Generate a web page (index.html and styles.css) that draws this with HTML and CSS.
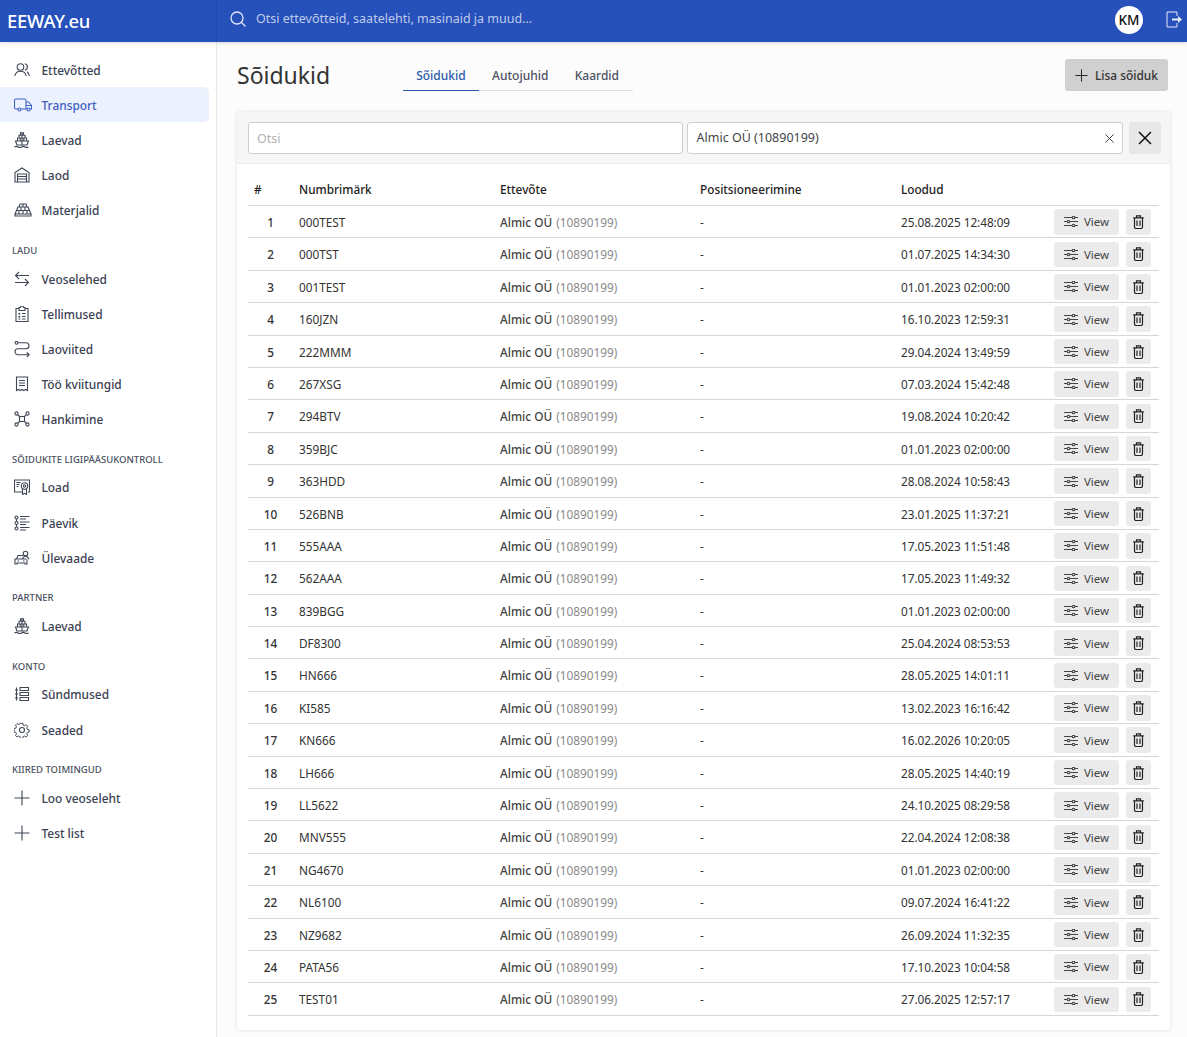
FILE: index.html
```html
<!DOCTYPE html>
<html lang="et">
<head>
<meta charset="utf-8">
<title>Sõidukid</title>
<link rel="stylesheet" href="styles.css">
</head>
<body>
<svg class="defs" width="0" height="0" aria-hidden="true">
  <defs>
    <symbol id="i-users" viewBox="0 0 16 16"><circle cx="6.500" cy="5" r="3.300"/><path d="M.8 14c.6-3 2.800-4.700 5.700-4.700s5.100 1.700 5.700 4.700M10.800 1.800c1.600.3 2.600 1.600 2.600 3.200s-1 2.900-2.500 3.200M13 9.800c1.200.8 2 2.200 2.400 4.200"/></symbol>
    <symbol id="i-truck" viewBox="0 0 18 14"><path d="M4 11H2a1.500 1.500 0 0 1-1.500-1.500v-7A1.500 1.500 0 0 1 2 1h8.500a1.500 1.500 0 0 1 1.500 1.500V11H7M12 4h2.500l3 3.500V11h-1.500M17 7.500h-5M12 11h1"/><circle cx="5.500" cy="11.500" r="1.500"/><circle cx="14.500" cy="11.500" r="1.500"/></symbol>
    <symbol id="i-ship" viewBox="0 0 16 16"><path d="M6.500 .8h3v2.400h-3zM5 3.200h6v2.800H5zM3.500 6h9v3h-9zM1.500 9h13l-1.500 4H3zM8 .8V13M6.200 6v3M9.800 6v3M.5 15c1.200-.8 2.300-.8 3.500 0s2.300.8 3.500 0 2.300-.8 3.500 0 2.300.8 3.500 0"/></symbol>
    <symbol id="i-store" viewBox="0 0 16 16"><path d="M1 15V5.500L8 1l7 4.500V15zM3.500 15V7h9v8M3.500 9.500h9M3.500 12h9"/></symbol>
    <symbol id="i-bricks" viewBox="0 0 18 14"><path d="M6 1h6l1 3H5zM4 4h10l1.500 3.500h-13zM2.500 7.500h13L17 11H1zM1 11h16v2H1zM9 1v3M7 4v3.500M11 4v3.500M5 7.500V11M9 7.500V11M13 7.500V11"/></symbol>
    <symbol id="i-swap" viewBox="0 0 16 16"><path d="M15 4.500H1.500M5 1 1.500 4.500 5 8M1 11.500h13.500M11 8l3.500 3.500L11 15"/></symbol>
    <symbol id="i-clip" viewBox="0 0 16 16"><path d="M5 2.500H2v13h12v-13h-3M5 1.500h1.500a1.500 1.500 0 0 1 3 0H11v3H5zM4.500 7.500l.7.700 1-1.200M8 7.500h3.500M4.500 10.500l.7.700 1-1.200M8 10.500h3.500M4.500 13h2M8 13h3.500"/></symbol>
    <symbol id="i-route" viewBox="0 0 16 16"><circle cx="2.500" cy="1.800" r="1.400"/><path d="M4 1.800h8a3 3 0 0 1 0 6H4a3 3 0 0 0 0 6h11M12.800 11.500l2.400 2.300-2.400 2.200"/></symbol>
    <symbol id="i-receipt" viewBox="0 0 16 16"><path d="M2.500 14.500V1h11v13.500l-1.800-1-1.900 1-1.800-1-1.800 1-1.900-1zM5 4.500h6M5 7h6M5 9.500h6"/></symbol>
    <symbol id="i-nodes" viewBox="0 0 16 16"><rect x="5.500" y="5.500" width="5" height="5"/><circle cx="2.500" cy="2.500" r="1.600"/><circle cx="13.500" cy="2.500" r="1.600"/><circle cx="2.500" cy="13.500" r="1.600"/><circle cx="13.500" cy="13.500" r="1.600"/><path d="M3.700 3.700l1.800 1.800M12.300 3.700l-1.800 1.800M3.700 12.300l1.800-1.800M12.300 12.300l-1.800-1.800"/></symbol>
    <symbol id="i-cert" viewBox="0 0 16 16"><path d="M8 13H.5V1h15v12h-1.500M2.500 3.500h4M2.500 5.500h3M2.500 7.500h2"/><circle cx="10.500" cy="7" r="3.200"/><circle cx="10.500" cy="7" r="1.200"/><path d="M8.500 10v5.500l2-1.200 2 1.200V10"/></symbol>
    <symbol id="i-log" viewBox="0 0 16 16"><circle cx="2.500" cy="2.500" r="1.500"/><circle cx="2.500" cy="8" r="1.500"/><circle cx="2.500" cy="13.500" r="1.500"/><path d="M2.500 4v2.500M2.500 9.500V12M6 1.500h9.500M6 4h6M6 7h9.500M6 9.500h6M6 12.500h9.500M6 15h6"/></symbol>
    <symbol id="i-carp" viewBox="0 0 16 16"><path d="M9 5.500H4L2.500 9H1v5h2v-1h8v1h2V9.500M2.500 9h10M3.500 11h1.500M9 11h1.500"/><circle cx="11.500" cy="3.500" r="2.300"/><path d="M8.500 9c.4-1.800 1.500-2.800 3-2.800s2.800 1 3.500 3"/></symbol>
    <symbol id="i-stack" viewBox="0 0 16 16"><path d="M6 1.500h8.500v3H6zM6 6.500h8.500v3H6zM6 11.500h8.500v3H6zM2.500 1.500v13M1 4h3M1 8h3M1 12h3"/></symbol>
    <symbol id="i-gear" viewBox="0 0 16 16"><circle cx="8" cy="8" r="2.500"/><path d="M6.700 1h2.600l.4 2 1.500.7 1.800-1.100 1.800 1.800-1.100 1.800.7 1.500 2 .4v2.600l-2 .4-.7 1.500 1.100 1.800-1.800 1.800-1.800-1.100-1.500.7-.4 2H6.700l-.4-2-1.500-.7-1.800 1.100-1.800-1.800 1.100-1.800-.7-1.500-2-.4V6.700l2-.4.7-1.500-1.100-1.800 1.800-1.800 1.800 1.100 1.500-.7z" transform="translate(.4 .4) scale(.9)"/></symbol>
    <symbol id="i-plus" viewBox="0 0 16 16"><path d="M8 .5v15M.5 8h15"/></symbol>
    <symbol id="i-sliders" viewBox="0 0 14 11"><path d="M0 1.500h8M11 1.500h3M0 5.500h3M6 5.500h8M0 9.500h8M11 9.500h3"/><circle cx="9.500" cy="1.500" r="1.300"/><circle cx="4.500" cy="5.500" r="1.300"/><circle cx="9.500" cy="9.500" r="1.300"/></symbol>
    <symbol id="i-trash" viewBox="0 0 11 14"><path d="M.2 2.800h10.600M3.500 2.800V.8h4v2M1.500 2.800V12a1.500 1.500 0 0 0 1.500 1.500h5A1.500 1.500 0 0 0 9.500 12V2.800M4 5.500v5.500M7 5.500v5.500"/></symbol>
  </defs>
</svg>

<header class="topbar">
  <div class="brand">EEWAY.eu</div>
  <div class="search">
    <svg class="search-icon" viewBox="0 0 16 16"><circle cx="7" cy="7" r="6"/><path d="M11.500 11.500 15.500 15.500"/></svg>
    <span>Otsi ettevõtteid, saatelehti, masinaid ja muud...</span>
  </div>
  <div class="avatar">KM</div>
  <svg class="logout" viewBox="0 0 17 17"><path d="M11 5V1H1v15h10v-4"/><path class="solid" d="M6 7.500h6V5l4 3.500-4 3.500V9.500H6z"/></svg>
</header>

<div class="shell">
  <nav class="sidebar">
    <a class="item"><svg class="ico"><use href="#i-users"/></svg>Ettevõtted</a>
    <a class="item active"><svg class="ico wide"><use href="#i-truck"/></svg>Transport</a>
    <a class="item"><svg class="ico"><use href="#i-ship"/></svg>Laevad</a>
    <a class="item"><svg class="ico"><use href="#i-store"/></svg>Laod</a>
    <a class="item"><svg class="ico wide"><use href="#i-bricks"/></svg>Materjalid</a>

    <div class="label">LADU</div>
    <a class="item"><svg class="ico"><use href="#i-swap"/></svg>Veoselehed</a>
    <a class="item"><svg class="ico"><use href="#i-clip"/></svg>Tellimused</a>
    <a class="item"><svg class="ico"><use href="#i-route"/></svg>Laoviited</a>
    <a class="item"><svg class="ico"><use href="#i-receipt"/></svg>Töö kviitungid</a>
    <a class="item"><svg class="ico"><use href="#i-nodes"/></svg>Hankimine</a>

    <div class="label">SÕIDUKITE LIGIPÄÄSUKONTROLL</div>
    <a class="item"><svg class="ico"><use href="#i-cert"/></svg>Load</a>
    <a class="item"><svg class="ico"><use href="#i-log"/></svg>Päevik</a>
    <a class="item"><svg class="ico"><use href="#i-carp"/></svg>Ülevaade</a>

    <div class="label">PARTNER</div>
    <a class="item"><svg class="ico"><use href="#i-ship"/></svg>Laevad</a>

    <div class="label">KONTO</div>
    <a class="item"><svg class="ico"><use href="#i-stack"/></svg>Sündmused</a>
    <a class="item"><svg class="ico"><use href="#i-gear"/></svg>Seaded</a>

    <div class="label">KIIRED TOIMINGUD</div>
    <a class="item"><svg class="ico"><use href="#i-plus"/></svg>Loo veoseleht</a>
    <a class="item"><svg class="ico"><use href="#i-plus"/></svg>Test list</a>
  </nav>

  <main class="main">
    <div class="page-head">
      <h1 class="title">Sõidukid</h1>
      <div class="tabs">
        <a class="tab on">Sõidukid</a>
        <a class="tab">Autojuhid</a>
        <a class="tab">Kaardid</a>
      </div>
      <button class="add"><svg class="add-ico"><use href="#i-plus"/></svg>Lisa sõiduk</button>
    </div>

    <section class="card">
      <div class="filters">
        <div class="field ph">Otsi</div>
        <div class="field sel"><span>Almic OÜ (10890199)</span><svg class="clear" viewBox="0 0 10 10"><path d="M.5.500l9 9M9.500.500l-9 9"/></svg></div>
        <button class="reset"><svg viewBox="0 0 14 14"><path d="M1 1l12 12M13 1 1 13"/></svg></button>
      </div>
      <div class="table-wrap">
        <div class="row head">
          <div>#</div><div>Numbrimärk</div><div>Ettevõte</div><div>Positsioneerimine</div><div>Loodud</div><div></div>
        </div>
        <div class="row"><div class="n">1</div><div>000TEST</div><div class="co"><b>Almic OÜ</b> <i>(10890199)</i></div><div class="p">-</div><div>25.08.2025 12:48:09</div><div class="acts"><button class="view"><svg><use href="#i-sliders"/></svg>View</button><button class="del"><svg><use href="#i-trash"/></svg></button></div></div>
        <div class="row"><div class="n">2</div><div>000TST</div><div class="co"><b>Almic OÜ</b> <i>(10890199)</i></div><div class="p">-</div><div>01.07.2025 14:34:30</div><div class="acts"><button class="view"><svg><use href="#i-sliders"/></svg>View</button><button class="del"><svg><use href="#i-trash"/></svg></button></div></div>
        <div class="row"><div class="n">3</div><div>001TEST</div><div class="co"><b>Almic OÜ</b> <i>(10890199)</i></div><div class="p">-</div><div>01.01.2023 02:00:00</div><div class="acts"><button class="view"><svg><use href="#i-sliders"/></svg>View</button><button class="del"><svg><use href="#i-trash"/></svg></button></div></div>
        <div class="row"><div class="n">4</div><div>160JZN</div><div class="co"><b>Almic OÜ</b> <i>(10890199)</i></div><div class="p">-</div><div>16.10.2023 12:59:31</div><div class="acts"><button class="view"><svg><use href="#i-sliders"/></svg>View</button><button class="del"><svg><use href="#i-trash"/></svg></button></div></div>
        <div class="row"><div class="n">5</div><div>222MMM</div><div class="co"><b>Almic OÜ</b> <i>(10890199)</i></div><div class="p">-</div><div>29.04.2024 13:49:59</div><div class="acts"><button class="view"><svg><use href="#i-sliders"/></svg>View</button><button class="del"><svg><use href="#i-trash"/></svg></button></div></div>
        <div class="row"><div class="n">6</div><div>267XSG</div><div class="co"><b>Almic OÜ</b> <i>(10890199)</i></div><div class="p">-</div><div>07.03.2024 15:42:48</div><div class="acts"><button class="view"><svg><use href="#i-sliders"/></svg>View</button><button class="del"><svg><use href="#i-trash"/></svg></button></div></div>
        <div class="row"><div class="n">7</div><div>294BTV</div><div class="co"><b>Almic OÜ</b> <i>(10890199)</i></div><div class="p">-</div><div>19.08.2024 10:20:42</div><div class="acts"><button class="view"><svg><use href="#i-sliders"/></svg>View</button><button class="del"><svg><use href="#i-trash"/></svg></button></div></div>
        <div class="row"><div class="n">8</div><div>359BJC</div><div class="co"><b>Almic OÜ</b> <i>(10890199)</i></div><div class="p">-</div><div>01.01.2023 02:00:00</div><div class="acts"><button class="view"><svg><use href="#i-sliders"/></svg>View</button><button class="del"><svg><use href="#i-trash"/></svg></button></div></div>
        <div class="row"><div class="n">9</div><div>363HDD</div><div class="co"><b>Almic OÜ</b> <i>(10890199)</i></div><div class="p">-</div><div>28.08.2024 10:58:43</div><div class="acts"><button class="view"><svg><use href="#i-sliders"/></svg>View</button><button class="del"><svg><use href="#i-trash"/></svg></button></div></div>
        <div class="row"><div class="n">10</div><div>526BNB</div><div class="co"><b>Almic OÜ</b> <i>(10890199)</i></div><div class="p">-</div><div>23.01.2025 11:37:21</div><div class="acts"><button class="view"><svg><use href="#i-sliders"/></svg>View</button><button class="del"><svg><use href="#i-trash"/></svg></button></div></div>
        <div class="row"><div class="n">11</div><div>555AAA</div><div class="co"><b>Almic OÜ</b> <i>(10890199)</i></div><div class="p">-</div><div>17.05.2023 11:51:48</div><div class="acts"><button class="view"><svg><use href="#i-sliders"/></svg>View</button><button class="del"><svg><use href="#i-trash"/></svg></button></div></div>
        <div class="row"><div class="n">12</div><div>562AAA</div><div class="co"><b>Almic OÜ</b> <i>(10890199)</i></div><div class="p">-</div><div>17.05.2023 11:49:32</div><div class="acts"><button class="view"><svg><use href="#i-sliders"/></svg>View</button><button class="del"><svg><use href="#i-trash"/></svg></button></div></div>
        <div class="row"><div class="n">13</div><div>839BGG</div><div class="co"><b>Almic OÜ</b> <i>(10890199)</i></div><div class="p">-</div><div>01.01.2023 02:00:00</div><div class="acts"><button class="view"><svg><use href="#i-sliders"/></svg>View</button><button class="del"><svg><use href="#i-trash"/></svg></button></div></div>
        <div class="row"><div class="n">14</div><div>DF8300</div><div class="co"><b>Almic OÜ</b> <i>(10890199)</i></div><div class="p">-</div><div>25.04.2024 08:53:53</div><div class="acts"><button class="view"><svg><use href="#i-sliders"/></svg>View</button><button class="del"><svg><use href="#i-trash"/></svg></button></div></div>
        <div class="row"><div class="n">15</div><div>HN666</div><div class="co"><b>Almic OÜ</b> <i>(10890199)</i></div><div class="p">-</div><div>28.05.2025 14:01:11</div><div class="acts"><button class="view"><svg><use href="#i-sliders"/></svg>View</button><button class="del"><svg><use href="#i-trash"/></svg></button></div></div>
        <div class="row"><div class="n">16</div><div>KI585</div><div class="co"><b>Almic OÜ</b> <i>(10890199)</i></div><div class="p">-</div><div>13.02.2023 16:16:42</div><div class="acts"><button class="view"><svg><use href="#i-sliders"/></svg>View</button><button class="del"><svg><use href="#i-trash"/></svg></button></div></div>
        <div class="row"><div class="n">17</div><div>KN666</div><div class="co"><b>Almic OÜ</b> <i>(10890199)</i></div><div class="p">-</div><div>16.02.2026 10:20:05</div><div class="acts"><button class="view"><svg><use href="#i-sliders"/></svg>View</button><button class="del"><svg><use href="#i-trash"/></svg></button></div></div>
        <div class="row"><div class="n">18</div><div>LH666</div><div class="co"><b>Almic OÜ</b> <i>(10890199)</i></div><div class="p">-</div><div>28.05.2025 14:40:19</div><div class="acts"><button class="view"><svg><use href="#i-sliders"/></svg>View</button><button class="del"><svg><use href="#i-trash"/></svg></button></div></div>
        <div class="row"><div class="n">19</div><div>LL5622</div><div class="co"><b>Almic OÜ</b> <i>(10890199)</i></div><div class="p">-</div><div>24.10.2025 08:29:58</div><div class="acts"><button class="view"><svg><use href="#i-sliders"/></svg>View</button><button class="del"><svg><use href="#i-trash"/></svg></button></div></div>
        <div class="row"><div class="n">20</div><div>MNV555</div><div class="co"><b>Almic OÜ</b> <i>(10890199)</i></div><div class="p">-</div><div>22.04.2024 12:08:38</div><div class="acts"><button class="view"><svg><use href="#i-sliders"/></svg>View</button><button class="del"><svg><use href="#i-trash"/></svg></button></div></div>
        <div class="row"><div class="n">21</div><div>NG4670</div><div class="co"><b>Almic OÜ</b> <i>(10890199)</i></div><div class="p">-</div><div>01.01.2023 02:00:00</div><div class="acts"><button class="view"><svg><use href="#i-sliders"/></svg>View</button><button class="del"><svg><use href="#i-trash"/></svg></button></div></div>
        <div class="row"><div class="n">22</div><div>NL6100</div><div class="co"><b>Almic OÜ</b> <i>(10890199)</i></div><div class="p">-</div><div>09.07.2024 16:41:22</div><div class="acts"><button class="view"><svg><use href="#i-sliders"/></svg>View</button><button class="del"><svg><use href="#i-trash"/></svg></button></div></div>
        <div class="row"><div class="n">23</div><div>NZ9682</div><div class="co"><b>Almic OÜ</b> <i>(10890199)</i></div><div class="p">-</div><div>26.09.2024 11:32:35</div><div class="acts"><button class="view"><svg><use href="#i-sliders"/></svg>View</button><button class="del"><svg><use href="#i-trash"/></svg></button></div></div>
        <div class="row"><div class="n">24</div><div>PATA56</div><div class="co"><b>Almic OÜ</b> <i>(10890199)</i></div><div class="p">-</div><div>17.10.2023 10:04:58</div><div class="acts"><button class="view"><svg><use href="#i-sliders"/></svg>View</button><button class="del"><svg><use href="#i-trash"/></svg></button></div></div>
        <div class="row"><div class="n">25</div><div>TEST01</div><div class="co"><b>Almic OÜ</b> <i>(10890199)</i></div><div class="p">-</div><div>27.06.2025 12:57:17</div><div class="acts"><button class="view"><svg><use href="#i-sliders"/></svg>View</button><button class="del"><svg><use href="#i-trash"/></svg></button></div></div>
      </div>
    </section>
  </main>
</div>
</body>
</html>
```
FILE: styles.css
```css
* { box-sizing: border-box; }
html, body { margin: 0; height: 100%; }
body {
  font-family: "Noto Sans", "Open Sans", sans-serif;
  font-size: 12px;
  color: #333;
  background: #fcfcfc;
  overflow: hidden;
}
.defs { display: block; height: 0; }

.topbar {
  height: 42px;
  background: #2650ba;
  display: flex;
  align-items: center;
  box-shadow: 0 1px 3px rgba(0, 0, 0, .15);
  position: relative;
}
.brand {
  width: 217px;
  height: 100%;
  padding: 0 0 2px 7px;
  display: flex;
  align-items: center;
  color: #fff;
  font-size: 18.400px;
  font-weight: 500;
  letter-spacing: -.2px;
  border-right: 1px solid #2349a9;
}
.search {
  flex: 1;
  display: flex;
  align-items: center;
  gap: 10px;
  padding-left: 13px;
  color: #bfcbea;
  font-size: 12.500px;
  margin-top: -6px;
}
.search-icon { width: 16px; height: 16px; fill: none; stroke: #dfe6f7; stroke-width: 1.300; margin-top: 2px; }
.avatar {
  width: 28px;
  height: 28px;
  border-radius: 50%;
  background: #fff;
  color: #111;
  font-size: 13.500px;
  font-weight: 500;
  display: flex;
  align-items: center;
  justify-content: center;
  margin-right: 23px;
  margin-top: -2px;
}
.logout { width: 17px; height: 17px; margin-right: 4px; margin-top: -4px; fill: none; stroke: #e6ebf8; stroke-width: 1; }
.logout .solid { fill: #e6ebf8; stroke: none; }

.shell { display: flex; height: calc(100% - 42px); }

.sidebar {
  width: 217px;
  flex: none;
  height: 100%;
  background: #fff;
  border-right: 1px solid #e8e8e8;
  padding: 10.100px 7px 0 0;
}
.item {
  height: 35.150px;
  display: flex;
  align-items: center;
  padding-left: 14px;
  gap: 11.500px;
  font-size: 11.900px;
  font-weight: 500;
  color: #3a4152;
  border-radius: 0 5px 5px 0;
}
.item.active { background: #ebf1fd; color: #3f5fc4; }
.ico {
  width: 16px;
  height: 16px;
  flex: none;
  fill: none;
  stroke: #3f4656;
  stroke-width: 1.100;
}
.ico.wide { width: 18px; margin-right: -2px; }
.item.active .ico { stroke: #3f63c8; }
.label {
  height: 33.200px;
  padding: 16px 0 0 12px;
  font-size: 9.500px;
  font-weight: 500;
  line-height: 14px;
  color: #4a5060;
}

.main { flex: 1; min-width: 0; padding: 17px 17px 0 20px; }
.page-head { display: flex; align-items: flex-start; height: 53px; padding-right: 2px; }
.title {
  margin: 0;
  width: 166px;
  font-size: 23px;
  font-weight: 400;
  line-height: 33px;
  color: #333;
}
.tabs {
  display: flex;
  width: 230px;
  height: 32px;
  border-bottom: 1px solid #dddfe6;
}
.tab {
  height: 32px;
  padding: 0 13.200px;
  line-height: 34px;
  font-size: 12px;
  font-weight: 500;
  color: #4c5261;
}
.tab.on { color: #2b5bab; border-bottom: 1px solid #2b5bab; }
.add {
  margin-left: auto;
  width: 103px;
  height: 32px;
  border: 0;
  border-radius: 3px;
  background: #d0d0d0;
  color: #333;
  font: 500 11.900px "Noto Sans", sans-serif;
  display: flex;
  align-items: center;
  justify-content: center;
  gap: 7px;
}
.add-ico { width: 13px; height: 13px; fill: none; stroke: #222; stroke-width: 1.200; }

.card {
  width: 933px;
  background: #fff;
  border-radius: 3px;
  box-shadow: 0 0 4px rgba(0, 0, 0, .12);
}
.filters {
  height: 52px;
  padding: 10px 9px 0 11px;
  background: #f6f6f6;
  border-bottom: 1px solid #ebebeb;
  display: flex;
  gap: 4px;
}
.field {
  height: 32px;
  background: #fff;
  border: 1px solid #cfcfcf;
  border-radius: 3px;
  display: flex;
  align-items: center;
  padding: 0 8px 2px;
  font-size: 12.500px;
}
.ph { width: 435px; color: #b3b3b3; padding-bottom: 0; }
.sel { width: 436px; justify-content: space-between; color: #444; padding-left: 8.500px; }
.clear { width: 9px; height: 9px; margin-top: 2px; fill: none; stroke: #333; stroke-width: 1; }
.reset {
  width: 32px;
  height: 32px;
  margin-left: 2px;
  border: 0;
  border-radius: 3px;
  background: #e8e8e8;
  padding: 9px;
  display: block;
}
.reset svg { display: block; width: 14px; height: 14px; fill: none; stroke: #111; stroke-width: 1.500; }

.table-wrap { padding: 10px 11px 14px; }
.row {
  display: grid;
  grid-template-columns: 45px 201px 200px 201px 153px 111px;
  height: 32.400px;
  padding-top: .600px;
  align-items: center;
  border-bottom: 1px solid #d6d6d6;
  font-size: 11.800px;
  color: #333;
}
.row > div { padding-left: 6px; white-space: nowrap; }
.row > div:nth-child(5) { letter-spacing: -.06px; }
.row.head { height: 32px; padding-top: 0; padding-bottom: 1px; font-weight: 500; color: #222; }
.row > .n { width: 45px; text-align: center; font-weight: 500; padding-left: 0; }
.co b { font-weight: 500; color: #444; }
.co i { font-style: normal; color: #8a8a8a; margin-left: 1px; }
.row > .acts { display: flex; gap: 7px; }
.view, .del {
  height: 25.500px;
  border: 0;
  border-radius: 3px;
  background: #ebebeb;
  color: #444;
  font: 400 11.500px "Noto Sans", sans-serif;
  display: flex;
  align-items: center;
  justify-content: center;
  padding: 0;
}
.view { width: 65px; gap: 6px; }
.view svg { width: 14px; height: 11px; fill: none; stroke: #444; stroke-width: 1.100; }
.del { width: 25px; }
.del svg { width: 11px; height: 14px; fill: none; stroke: #222; stroke-width: 1.200; }
```
